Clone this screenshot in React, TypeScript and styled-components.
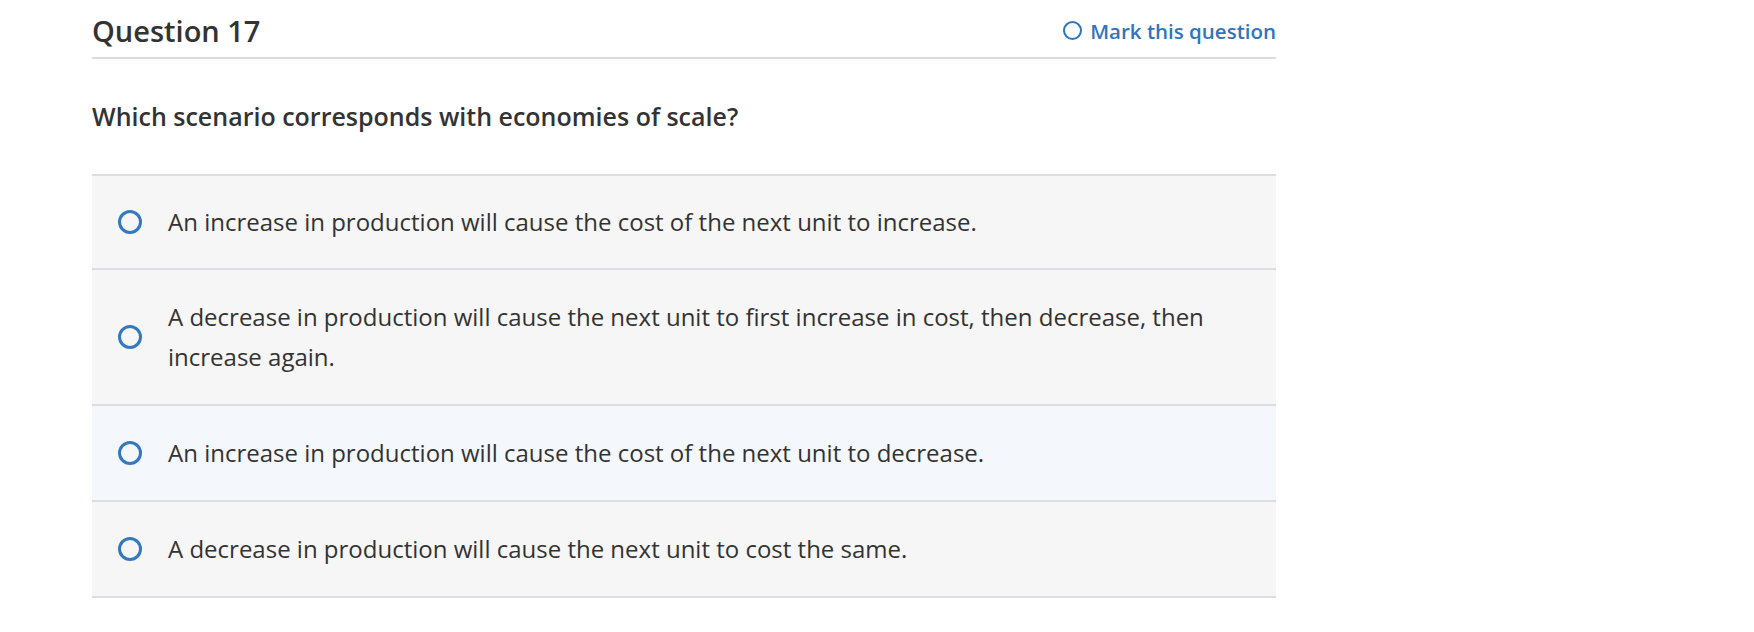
import React from "react";
import styled, { createGlobalStyle } from "styled-components";

const Global = createGlobalStyle`
  html, body { margin: 0; padding: 0; background: #ffffff; }
  body {
    font-family: "Open Sans", "Liberation Sans", sans-serif;
    color: #333333;
    font-variant-ligatures: none;
  }
`;

const Page = styled.div`
  padding: 0 0 0 92px;
`;

const Container = styled.div`
  width: 1184px;
`;

const Header = styled.div`
  display: flex;
  justify-content: space-between;
  align-items: center;
  box-sizing: border-box;
  height: 59px;
  padding-top: 4px;
  border-bottom: 2px solid #dcdce0;
`;

const Title = styled.h2`
  margin: 0;
  font-size: 29px;
  font-weight: 600;
  color: #333333;
`;

const MarkButton = styled.button`
  display: flex;
  align-items: center;
  gap: 8px;
  border: none;
  background: none;
  padding: 0;
  font-family: inherit;
  font-size: 20.5px;
  font-weight: 600;
  color: #2f74bf;
  cursor: pointer;
`;

const SmallRing = styled.span`
  width: 15px;
  height: 15px;
  border: 2px solid #2f74bf;
  border-radius: 50%;
`;

const Prompt = styled.p`
  margin: 40px 0 41px;
  font-size: 25px;
  font-weight: 600;
  color: #333333;
`;

const Options = styled.ul`
  list-style: none;
  margin: 0;
  padding: 0;
  border-top: 2px solid #dedee2;
`;

const Option = styled.li<{ $hover?: boolean }>`
  display: flex;
  align-items: center;
  gap: 26px;
  padding: 27px 36px 27px 26px;
  background: ${(p) => (p.$hover ? "#f4f8fc" : "#f6f6f6")};
  border-bottom: 2px solid #dedee2;

  &:first-child {
    padding-top: 26px;
    padding-bottom: 26px;
  }
`;

const Radio = styled.span`
  flex: none;
  width: 18px;
  height: 18px;
  border: 3px solid #3479bf;
  border-radius: 50%;
`;

const OptionText = styled.span`
  font-size: 24px;
  line-height: 40px;
  color: #333333;
`;

const choices = [
  "An increase in production will cause the cost of the next unit to increase.",
  "A decrease in production will cause the next unit to first increase in cost, then decrease, then increase again.",
  "An increase in production will cause the cost of the next unit to decrease.",
  "A decrease in production will cause the next unit to cost the same.",
];

export default function App() {
  return (
    <>
      <Global />
      <Page>
        <Container>
          <Header>
            <Title>Question 17</Title>
            <MarkButton>
              <SmallRing />
              Mark this question
            </MarkButton>
          </Header>
          <Prompt>Which scenario corresponds with economies of scale?</Prompt>
          <Options>
            {choices.map((c, i) => (
              <Option key={i} $hover={i === 2}>
                <Radio />
                <OptionText>{c}</OptionText>
              </Option>
            ))}
          </Options>
        </Container>
      </Page>
    </>
  );
}
